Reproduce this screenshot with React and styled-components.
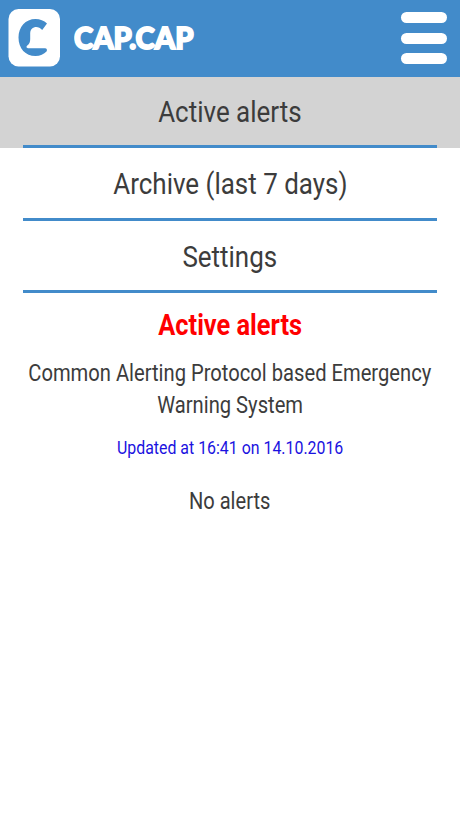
import React from 'react'
import styled, { createGlobalStyle } from "styled-components";

const GlobalStyle = createGlobalStyle`
  * {
    box-sizing: border-box;
  }

  body {
    margin: 0;
    background-color: #ffffff;
    font-family: Roboto, 'Liberation Sans', sans-serif;
    color: #3c3c3c;
    overflow-x: hidden;
  }
`

const Header = styled.header`
  display: flex;
  align-items: center;
  justify-content: space-between;
  height: 77px;
  padding: 0 13px 1px 8px;
  background-color: #428bca;
`

const Brand = styled.div`
  display: flex;
  align-items: center;
  gap: 14px;

  svg {
    display: block;
  }
`

const BrandName = styled.span`
  font-family: Lato, sans-serif;
  font-size: 30px;
  font-weight: 900;
  line-height: 36px;
  padding-bottom: 2px;
  color: #ffffff;
  white-space: nowrap;
  transform: scaleX(0.97);
  transform-origin: left center;
  -webkit-text-stroke: 1.8px #ffffff;
`

const MenuButton = styled.button`
  display: flex;
  flex-direction: column;
  gap: 9.5px;
  padding: 0;
  border: none;
  background: transparent;
  cursor: pointer;

  span {
    width: 46px;
    height: 11px;
    border-radius: 6px;
    background-color: #ffffff;
  }
`

const MenuItem = styled.a`
  display: flex;
  flex-direction: column;
  align-items: center;
  height: ${props => props.$height}px;
  background-color: ${props => props.$active ? "#d3d3d3" : "transparent"};
  cursor: pointer;

  > div {
    display: flex;
    flex: 1;
    align-items: center;
    justify-content: center;
    width: 414px;
    padding-top: 2px;
    border-bottom: 3px solid #428bca;
  }
`

// Condensed label, narrowed around its centre
const Label = styled.span`
  font-size: ${props => props.$size}px;
  font-weight: ${props => props.$bold ? 700 : 400};
  line-height: ${props => props.$line}px;
  color: ${props => props.$color || "inherit"};
  white-space: nowrap;
  transform: scaleX(${props => props.$narrow || 0.865});
`

const Content = styled.main`
  display: flex;
  flex-direction: column;
  align-items: center;
  padding-top: 14px;
`

const Description = styled.div`
  display: flex;
  flex-direction: column;
  align-items: center;
  margin: 15px 0 14px;
`

const EmptyMessage = styled.div`
  display: flex;
  margin-top: 26px;
`

const menus = [
  { name: "Active alerts", height: 71, active: true },
  { name: "Archive (last 7 days)", height: 73 },
  { name: "Settings", height: 72 },
]

function Logo() {
  return (
    <svg width="52" height="58" viewBox="0 0 52 58">
      <rect x="0.5" y="0" width="51.5" height="57.5" rx="10" fill="#ffffff" />
      <path
        d="M39 14.5C36 11.5 32 10 27.5 10C17.5 10 10.5 18 10.5 28.5C10.5 39.5 17.5 47 27.5 47C32 47 36 45.200 38.500 42.500C39.500 41 38.800 39.200 37 39.200H20C18.300 39 18 37.500 19.300 36.500C21.500 35 22.200 33 22.200 30V24C22.200 21 24 18.800 26.500 18.200C29.500 17.500 32 18.800 34.200 21Z"
        fill="#428bca"
      />
    </svg>
  )
}

function App() {
  return (
    <>
      <GlobalStyle />
      <Header>
        <Brand>
          <Logo />
          <BrandName>CAP.CAP</BrandName>
        </Brand>
        <MenuButton aria-label="Menu">
          <span />
          <span />
          <span />
        </MenuButton>
      </Header>
      <nav>
        {menus.map((item) => (
          <MenuItem key={item.name} $height={item.height} $active={item.active}>
            <div>
              <Label $size={30} $line={36}>{item.name}</Label>
            </div>
          </MenuItem>
        ))}
      </nav>
      <Content>
        <Label $size={29} $line={36} $narrow={0.875} $color="#ff0000" $bold>Active alerts</Label>
        <Description>
          <Label $size={23} $line={32} $narrow={0.877}>Common Alerting Protocol based Emergency</Label>
          <Label $size={23} $line={32} $narrow={0.877}>Warning System</Label>
        </Description>
        <Label $size={18} $line={24} $narrow={0.883} $color="#1a12e0">Updated at 16:41 on 14.10.2016</Label>
        <EmptyMessage>
          <Label $size={23} $line={32} $narrow={0.873}>No alerts</Label>
        </EmptyMessage>
      </Content>
    </>
  )
}

export default App
